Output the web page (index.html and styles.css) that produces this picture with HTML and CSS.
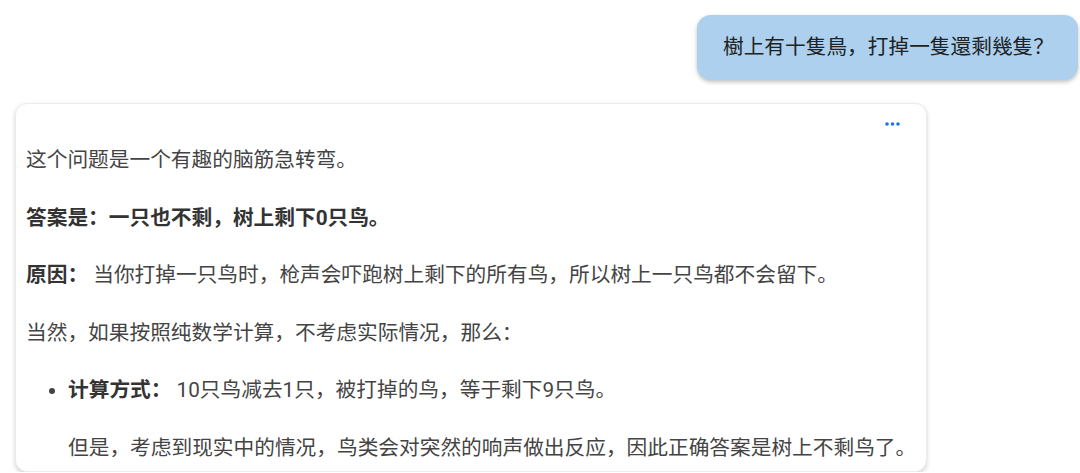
FILE: index.html
```html
<!DOCTYPE html>
<html lang="zh">
<head>
    <meta charset="UTF-8">
    <meta name="viewport" content="width=device-width, initial-scale=1.0">
    <title>Chat</title>
    <link rel="stylesheet" href="styles.css">
</head>
<body>
    <div class="chat">
        <div class="row row-user">
            <div class="bubble-user">樹上有十隻鳥，打掉一隻還剩幾隻？</div>
        </div>

        <div class="row row-bot">
            <div class="card-bot">
                <div class="card-top">
                    <svg class="more" width="15" height="6" viewBox="0 0 15 6">
                        <circle cx="2" cy="3" r="1.8"/>
                        <circle cx="7.5" cy="3" r="1.8"/>
                        <circle cx="13" cy="3" r="1.8"/>
                    </svg>
                </div>
                <div class="answer">
                    <p>这个问题是一个有趣的脑筋急转弯。</p>
                    <p><strong>答案是：一只也不剩，树上剩下0只鸟。</strong></p>
                    <p><strong>原因：</strong> 当你打掉一只鸟时，枪声会吓跑树上剩下的所有鸟，所以树上一只鸟都不会留下。</p>
                    <p>当然，如果按照纯数学计算，不考虑实际情况，那么：</p>
                    <ul>
                        <li>
                            <p><strong>计算方式：</strong> 10只鸟减去1只，被打掉的鸟，等于剩下9只鸟。</p>
                            <p>但是，考虑到现实中的情况，鸟类会对突然的响声做出反应，因此正确答案是树上不剩鸟了。</p>
                        </li>
                    </ul>
                </div>
            </div>
        </div>
    </div>
</body>
</html>
```

FILE: styles.css
```css
body {
    margin: 0;
    background-color: #fff;
    font-family: Roboto, 'Noto Sans CJK SC', 'Noto Sans', sans-serif;
    color: #444;
}
.chat {
    display: flex;
    flex-direction: column;
    gap: 23px;
    padding: 15px 2px 0 15px;
}
.row {
    display: flex;
}
.row-user {
    justify-content: flex-end;
}
.bubble-user {
    background-color: #acd0ee;
    color: #222;
    font-size: 20.7px;
    line-height: 30px;
    padding: 17px 24px 18px 26px;
    border-radius: 14px;
    box-shadow: 0 2px 4px rgba(0, 0, 0, 0.25);
}
.card-bot {
    width: 912px;
    box-sizing: border-box;
    background-color: #fff;
    border: 1px solid #ececec;
    border-radius: 12px;
    box-shadow: 0 2px 4px rgba(0, 0, 0, 0.18);
    padding: 9px 6px 8px 10px;
}
.card-top {
    display: flex;
    justify-content: flex-end;
    align-items: center;
    height: 22px;
    padding-right: 20px;
}
.more {
    fill: #1a73e8;
}
.answer {
    font-size: 20.7px;
    line-height: 30px;
}
.answer p {
    margin: 10px 0 27.6px;
}
.answer p:first-child {
    margin-top: 10px;
}
.answer strong {
    color: #333;
    font-weight: bold;
}
.answer ul {
    margin: 0;
    padding-left: 42px;
}
.answer li p:first-child {
    margin-top: 0;
}
.answer li p:last-child {
    margin-bottom: 0;
}
```
